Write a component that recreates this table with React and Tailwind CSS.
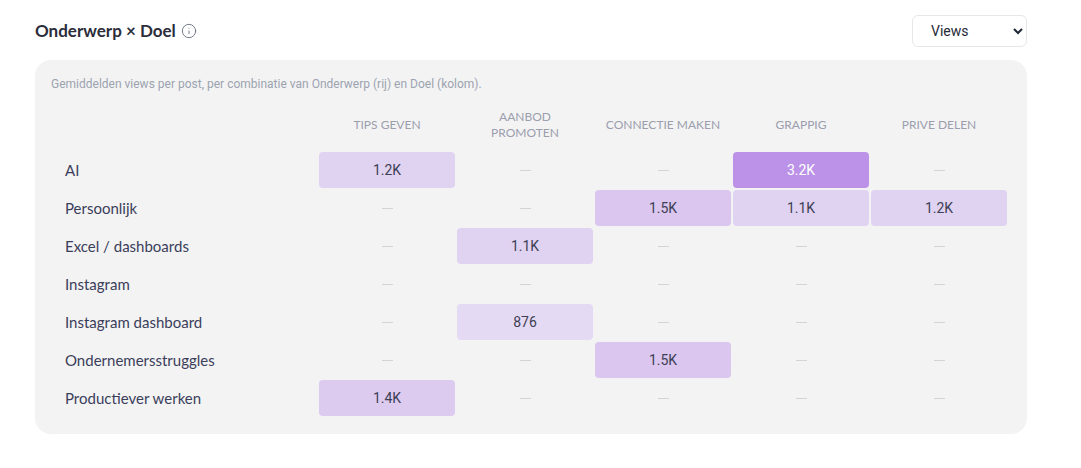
import React from 'react';
import { Info } from 'lucide-react';

const columns = [['Tips geven'], ['Aanbod', 'promoten'], ['Connectie maken'], ['Grappig'], ['Prive delen']];

// values per row, null = no data
const rows = [
  { label: 'AI', values: ['1.2K', null, null, '3.2K', null] },
  { label: 'Persoonlijk', values: [null, null, '1.5K', '1.1K', '1.2K'] },
  { label: 'Excel / dashboards', values: [null, '1.1K', null, null, null] },
  { label: 'Instagram', values: [null, null, null, null, null] },
  { label: 'Instagram dashboard', values: [null, '876', null, null, null] },
  { label: 'Ondernemersstruggles', values: [null, null, '1.5K', null, null] },
  { label: 'Productiever werken', values: ['1.4K', null, null, null, null] },
];

const cellTone = (v) => {
  if (v === '3.2K') return 'bg-[#bc92e8] text-white';
  if (v === '1.5K') return 'bg-[#dac6ee] text-[#3d3f55]';
  if (v === '1.4K') return 'bg-[#dccaef] text-[#3d3f55]';
  if (v === '876') return 'bg-[#e5daf3] text-[#3d3f55]';
  return 'bg-[#e0d2f1] text-[#3d3f55]';
};

const Cell = ({ value }) => {
  if (!value) {
    return (
      <div className="h-9 flex items-center justify-center">
        <span className="block w-[11px] h-px bg-[#d4d4d8]" />
      </div>
    );
  }
  return (
    <div
      className={`h-9 rounded-[4px] flex items-center justify-center text-[14px] ${cellTone(value)}`}
      style={{ fontFamily: 'Roboto, sans-serif' }}
    >
      {value}
    </div>
  );
};

export default function App() {
  return (
    <div className="bg-white min-h-[468px] pt-[15px]">
      <div className="ml-[35px] w-[992px]">
        <div className="flex items-center justify-between h-8">
          <div className="flex items-center gap-[5px]">
            <h2
              className="text-[17px] font-bold text-[#2b2d3a]"
              style={{ fontFamily: 'Lato, sans-serif' }}
            >
              Onderwerp × Doel
            </h2>
            <Info size={16} strokeWidth={1.4} className="text-[#6b7280]" />
          </div>
          <select
            className="w-[115px] h-8 rounded-md border border-[#e5e7eb] bg-white pl-[14px] pr-1 text-[14px] text-[#1f2937]"
            style={{ fontFamily: 'Roboto, sans-serif' }}
            defaultValue="views"
          >
            <option value="views">Views</option>
            <option value="likes">Likes</option>
          </select>
        </div>

        <div className="mt-[13px] bg-[#f3f3f4] rounded-2xl pt-4 pb-[18px] pl-4 pr-[18px]">
          <p
            className="text-[12px] leading-4 text-[#9ca3af]"
            style={{ fontFamily: 'Roboto, sans-serif' }}
          >
            Gemiddelden views per post, per combinatie van Onderwerp (rij) en Doel (kolom).
          </p>

          <div
            className="mt-2 grid grid-cols-[266px_repeat(5,136px)] gap-[2px]"
            style={{ fontFamily: 'Lato, sans-serif' }}
          >
            <div className="h-[50px]" />
            {columns.map((lines) => (
              <div
                key={lines.join(' ')}
                className="h-[50px] flex flex-col items-center justify-center text-center uppercase text-[12px] leading-4 text-[#9b9eac] whitespace-nowrap"
              >
                {lines.map((l) => (
                  <span key={l}>{l}</span>
                ))}
              </div>
            ))}

            {rows.map((r) => (
              <React.Fragment key={r.label}>
                <div className="h-9 flex items-center pl-[14px] text-[15px] text-[#3b3e5a]">
                  {r.label}
                </div>
                {r.values.map((v, i) => (
                  <Cell key={i} value={v} />
                ))}
              </React.Fragment>
            ))}
          </div>
        </div>
      </div>
    </div>
  );
}
